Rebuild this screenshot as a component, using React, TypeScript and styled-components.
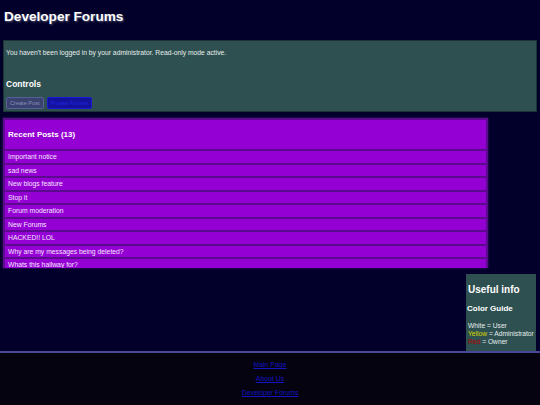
import * as React from "react";
import styled, { createGlobalStyle } from "styled-components";

const GlobalStyle = createGlobalStyle`
  html, body {
    margin: 0;
    padding: 0;
    background: #02002a;
    font-family: "Liberation Sans", Arial, sans-serif;
    color: #ffffff;
  }
`;

const Page = styled.div`
  display: flex;
  flex-direction: column;
  min-height: 405px;
`;

const Title = styled.h1`
  margin: 9px 4px 16px;
  font-size: 13.6px;
  font-weight: bold;
  text-shadow: 1px 1px 2px rgba(255, 255, 255, 0.35);
`;

const Panel = styled.section`
  background: #2f5050;
  margin: 0 3px;
  padding: 8px 2px 2px;
  border: 1px solid #1c3434;
`;

const Notice = styled.p`
  margin: 0 0 23px;
  font-size: 6.75px;
  color: #e6eeee;
`;

const SubHeading = styled.h3<{ size?: number; gap?: number }>`
  margin: 0 0 ${(p) => (p.gap === undefined ? 8 : p.gap)}px;
  font-size: ${(p) => p.size || 8.5}px;
  font-weight: bold;
  white-space: nowrap;
`;

const ButtonRow = styled.div`
  display: flex;
  gap: 3px;
`;

const Button = styled.button<{ primary?: boolean }>`
  font-family: "Liberation Sans", Arial, sans-serif;
  font-size: 5.6px;
  height: 12px;
  padding: 0 3px;
  border-radius: 2px;
  border: 1px solid ${(p) => (p.primary ? "#1a1ad0" : "#5a5f9a")};
  background: ${(p) => (p.primary ? "#12129c" : "#3a4270")};
  color: ${(p) => (p.primary ? "#2424e0" : "#8a90b8")};
`;

const Posts = styled.section`
  width: 481px;
  height: 146px;
  margin: 6px 3px 0;
  padding: 2px;
  background: #5c0b8e;
  box-shadow: 0 0 2px #5c0b8e;
  overflow: hidden;
  display: flex;
  flex-direction: column;
  gap: 2px;
`;

const PostsHeader = styled.div`
  background: #9400d3;
  height: 29px;
  display: flex;
  align-items: center;
  padding: 0 3px;
  font-size: 8px;
  font-weight: bold;
  flex-shrink: 0;
`;

const PostItem = styled.div`
  background: #9400d3;
  height: 11.5px;
  display: flex;
  align-items: center;
  padding: 0 3px;
  font-size: 6.8px;
  color: #f4e8ff;
  flex-shrink: 0;
`;

const InfoBox = styled.aside`
  align-self: flex-end;
  width: 69px;
  height: 73px;
  margin: 6px 4px 0 0;
  padding: 4px 0 0 1px;
  background: #2f5050;
  overflow: hidden;
`;

const InfoTitle = styled.h2`
  margin: 6px 0 9px 1px;
  font-size: 10px;
  font-weight: bold;
  white-space: nowrap;
`;

const GuideLine = styled.div`
  font-size: 6.7px;
  line-height: 8px;
  color: #e6eeee;
  white-space: nowrap;
  padding-left: 1px;
`;

const Role = styled.span<{ color: string }>`
  color: ${(p) => p.color};
`;

const Footer = styled.footer`
  flex: 1;
  background: #05030f;
  border-top: 2px solid #4a4896;
  display: flex;
  flex-direction: column;
  align-items: center;
  gap: 7px;
  padding-top: 8px;
`;

const FooterLink = styled.a`
  font-size: 6.9px;
  color: #1414c0;
  text-decoration: underline;
`;

const posts = [
  "Important notice",
  "sad news",
  "New blogs feature",
  "Stop it",
  "Forum moderation",
  "New Forums",
  "HACKED!! LOL",
  "Why are my messages being deleted?",
  "Whats this hallway for?",
];

export default function App() {
  return (
    <Page>
      <GlobalStyle />
      <Title>Developer Forums</Title>
      <Panel>
        <Notice>You haven't been logged in by your administrator. Read-only mode active.</Notice>
        <SubHeading>Controls</SubHeading>
        <ButtonRow>
          <Button>Create Post</Button>
          <Button primary>Private Forums</Button>
        </ButtonRow>
      </Panel>
      <Posts>
        <PostsHeader>Recent Posts (13)</PostsHeader>
        {posts.map((p) => (
          <PostItem key={p}>{p}</PostItem>
        ))}
      </Posts>
      <InfoBox>
        <InfoTitle>Useful info</InfoTitle>
        <SubHeading size={8} gap={9}>Color Guide</SubHeading>
        <GuideLine>White = User</GuideLine>
        <GuideLine>
          <Role color="#d8d800">Yellow</Role> = Administrator
        </GuideLine>
        <GuideLine>
          <Role color="#b00000">Red</Role> = Owner
        </GuideLine>
      </InfoBox>
      <Footer>
        <FooterLink href="#">Main Page</FooterLink>
        <FooterLink href="#">About Us</FooterLink>
        <FooterLink href="#">Developer Forums</FooterLink>
      </Footer>
    </Page>
  );
}
